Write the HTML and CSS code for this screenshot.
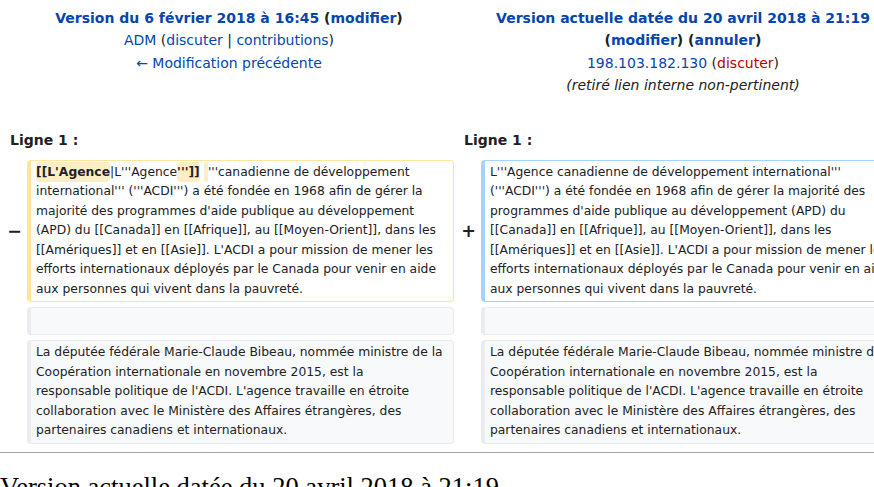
FILE: index.html
```html
<!DOCTYPE html>
<html lang="fr">
<head>
<meta charset="utf-8">
<title>Différences entre les versions</title>
<link rel="stylesheet" href="styles.css">
</head>
<body>
<div class="diff">
  <div class="title title-old">
    <div class="t-head"><a href="#">Version du 6 février 2018 à 16:45</a> (<a href="#">modifier</a>)</div>
    <div><a href="#">ADM</a> (<a href="#">discuter</a> | <a href="#">contributions</a>)</div>
    <div><a href="#">← Modification précédente</a></div>
  </div>
  <div class="title title-new">
    <div class="t-head"><a href="#">Version actuelle datée du 20 avril 2018 à 21:19</a> (<a href="#">modifier</a>) (<a href="#">annuler</a>)</div>
    <div><a href="#">198.103.182.130</a> (<a href="#" class="new">discuter</a>)</div>
    <div class="comment">(retiré lien interne non-pertinent)</div>
  </div>

  <div class="lineno lineno-old">Ligne 1 :</div>
  <div class="lineno lineno-new">Ligne 1 :</div>

  <div class="marker">−</div>
  <div class="cell deleted"><b class="dc">[[L'Agence</b>|L'''Agence<b class="dc">''']]</b> <b class="dc"> </b>'''canadienne de développement international''' ('''ACDI''') a été fondée en 1968 afin de gérer la majorité des programmes d'aide publique au développement (APD) du [[Canada]] en [[Afrique]], au [[Moyen-Orient]], dans les [[Amériques]] et en [[Asie]]. L'ACDI a pour mission de mener les efforts internationaux déployés par le Canada pour venir en aide aux personnes qui vivent dans la pauvreté.</div>
  <div class="marker">+</div>
  <div class="cell added">L'''Agence canadienne de développement international''' ('''ACDI''') a été fondée en 1968 afin de gérer la majorité des programmes d'aide publique au développement (APD) du [[Canada]] en [[Afrique]], au [[Moyen-Orient]], dans les [[Amériques]] et en [[Asie]]. L'ACDI a pour mission de mener les efforts internationaux déployés par le Canada pour venir en aide aux personnes qui vivent dans la pauvreté.</div>

  <div class="cell context empty col-old"></div>
  <div class="cell context empty col-new"></div>

  <div class="cell context col-old">La députée fédérale Marie-Claude Bibeau, nommée ministre de la<br>Coopération internationale en novembre 2015, est la<br>responsable politique de l'ACDI. L'agence travaille en étroite<br>collaboration avec le Ministère des Affaires étrangères, des<br>partenaires canadiens et internationaux.</div>
  <div class="cell context col-new">La députée fédérale Marie-Claude Bibeau, nommée ministre de la<br>Coopération internationale en novembre 2015, est la<br>responsable politique de l'ACDI. L'agence travaille en étroite<br>collaboration avec le Ministère des Affaires étrangères, des<br>partenaires canadiens et internationaux.</div>
</div>
<hr class="diff-hr">
<h2 class="current-title">Version actuelle datée du 20 avril 2018 à 21:19</h2>
</body>
</html>
```

FILE: styles.css
```css
html, body {
  margin: 0;
  padding: 0;
  overflow-x: hidden;
  background: #fff;
}
body {
  font-family: "DejaVu Sans", sans-serif;
  font-size: 14px;
  line-height: 1.6;
  color: #202122;
}
a {
  color: #0645ad;
  text-decoration: none;
}
a.new {
  color: #ba0000;
}

.diff {
  display: grid;
  grid-template-columns: 19px 427px 19px 427px;
  column-gap: 4px;
  row-gap: 5px;
  padding: 4px;
  width: 910px;
  box-sizing: border-box;
}

.title {
  grid-column: span 2;
  text-align: center;
  padding: 3px 7px 23px;
}
.t-head {
  font-weight: bold;
}
.comment {
  font-style: italic;
}

.lineno {
  grid-column: span 2;
  font-weight: bold;
  padding: 4px 6px;
}

.marker {
  align-self: center;
  text-align: right;
  font-weight: bold;
  font-size: 17.5px;
  line-height: 1.2;
  padding-right: 1px;
}

.cell {
  font-size: 12.32px;
  line-height: 19.5px;
  white-space: pre-wrap;
  word-wrap: break-word;
  border-style: solid;
  border-width: 1px 1px 1px 4px;
  border-radius: 4px;
  padding: 2px 7px 2px 5px;
}
.deleted {
  border-color: #ffe49c;
}
.added {
  border-color: #a3d3ff;
}
.context {
  background: #f8f9fa;
  border-color: #eaecf0;
  color: #222;
}
.empty {
  min-height: 22px;
}
.col-old {
  grid-column: 2;
}
.col-new {
  grid-column: 4;
}
.dc {
  font-weight: bold;
  background: #feeec8;
  border-radius: 4px;
  padding: 3px 0;
}

.diff-hr {
  border: 0;
  border-top: 1px solid #a2a9b1;
  height: 0;
  margin: 4px 0 0;
}
.current-title {
  font-family: "Liberation Serif", "Times New Roman", serif;
  font-weight: normal;
  font-size: 26.5px;
  line-height: 1.3;
  margin: 17px 0 0;
  color: #000;
  white-space: nowrap;
}
```
